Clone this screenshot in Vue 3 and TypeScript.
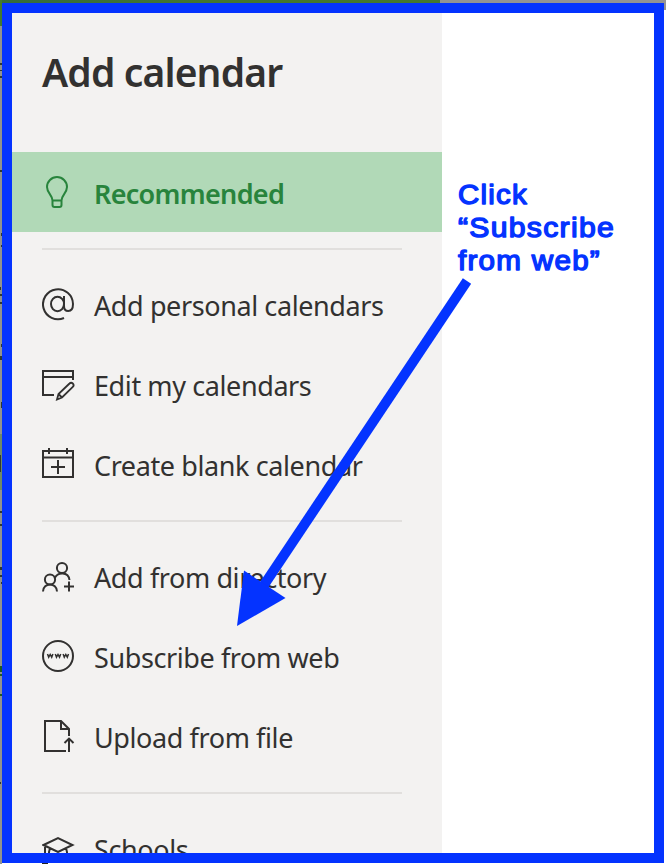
<script setup lang="ts">
type IconName = 'at' | 'edit' | 'create' | 'people' | 'web' | 'upload' | 'school'

interface MenuItem {
  label: string
  icon: IconName
}

const groups: MenuItem[][] = [
  [
    { label: 'Add personal calendars', icon: 'at' },
    { label: 'Edit my calendars', icon: 'edit' },
    { label: 'Create blank calendar', icon: 'create' },
  ],
  [
    { label: 'Add from directory', icon: 'people' },
    { label: 'Subscribe from web', icon: 'web' },
    { label: 'Upload from file', icon: 'upload' },
  ],
  [{ label: 'Schools', icon: 'school' }],
]
</script>

<template>
  <div class="page">
    <div class="backdrop-top"></div>
    <svg class="backdrop-left" width="2" height="864" viewBox="0 0 2 864" aria-hidden="true">
      <rect width="2" height="864" fill="#93938c" />
      <rect width="2" height="26" fill="#437a2b" />
      <rect y="434" width="2" height="56" fill="#718965" />
      <path d="M0 63h2v2H0zM0 70h2v1H0zM0 76h2v2H0zM0 170h2v2H0zM1 233h1v3H1zM1 245h1v2H1zM0 287h1v3H0zM0 294h2v2H0zM0 302h2v2H0zM1 344h1v3H1zM0 356h2v4H0zM1 402h1v6H1zM0 455h1v17H0zM0 511h2v2H0zM0 524h2v2H0zM0 567h2v3H0zM0 575h2v2H0zM1 582h1v2H1zM0 782h1v2H0z" fill="#303a30" />
      <path d="M0 666h2v6H0zM0 674h2v2H0zM0 694h2v2H0z" fill="#205c20" />
    </svg>
    <div class="backdrop-mark"></div>

    <main class="frame">
      <aside class="panel">
        <h1 class="title">Add calendar</h1>
        <nav>
          <div class="item selected">
            <svg class="icon" width="34" height="34" viewBox="0 0 34 34">
              <path d="M10.500 25.500C10.500 20 5 18 5 12a10 10 0 0 1 20 0c0 6-5.500 8-5.500 13.500zM10.500 25.500V30q0 2 2 2h5q2 0 2-2v-4.500" />
            </svg>
            <span class="label">Recommended</span>
          </div>
          <template v-for="(group, g) in groups" :key="g">
            <hr class="divider" />
            <div v-for="item in group" :key="item.label" class="item">
              <svg class="icon" width="34" height="34" viewBox="0 0 34 34">
                <g v-if="item.icon === 'at'">
                  <path d="M22 31A15 15 0 1 1 31 17c0 4.500-2 7-4.800 7s-4.200-2-4.200-5V9" />
                  <ellipse cx="15.500" cy="17" rx="6.500" ry="7.200" />
                </g>
                <g v-else-if="item.icon === 'edit'">
                  <path d="M12 28H1V4h30v9M1 10h30" />
                  <path d="m15 32.500 1.500-5.500L27.500 16.500a2.200 2.200 0 0 1 3.300 3.300L20 30.500zM16.500 27 20 30.500" stroke-width="1.800" />
                </g>
                <g v-else-if="item.icon === 'create'">
                  <path d="M1 4h30v26H1zM1 10.500h30M7 1v6M25 1v6M16 13v14M9 20h14" />
                </g>
                <g v-else-if="item.icon === 'people'">
                  <circle cx="20" cy="9" r="5.100" />
                  <circle cx="8" cy="20.500" r="5.100" />
                  <path d="M1 32.500c0-9.500 14-9.500 14 0M12.500 19.500c3-7 14-7 15 1.500M27 22.500v10M22 27.500h10" />
                </g>
                <g v-else-if="item.icon === 'web'">
                  <circle cx="16" cy="17" r="15" />
                  <path d="m5.500 15 1.200 3.200L8.200 15.500l1.500 2.700 1.200-3.200M13.300 15l1.200 3.200 1.500-2.700 1.500 2.700 1.200-3.200M21.100 15l1.200 3.200 1.500-2.700 1.500 2.700 1.200-3.200" stroke-width="1.500" />
                </g>
                <g v-else-if="item.icon === 'upload'">
                  <path d="M24 32H3V2h16l8 8v7M19 2v8h8M27 33V20M22.500 24l4.500-4.400 4.500 4.400" />
                </g>
                <g v-else>
                  <path d="m1.500 14 14.500-7 14.500 7L16 21zM3 14v14M8 17l-1 4v8M24 17l1 4v8" />
                </g>
              </svg>
              <span class="label">{{ item.label }}</span>
            </div>
          </template>
        </nav>
      </aside>
    </main>

    <svg class="annotation" width="666" height="864" viewBox="0 0 666 864">
      <path d="M467 281 262 588" stroke="#0433ff" stroke-width="10" />
      <path d="M244 570.500 285.500 598 237 626z" fill="#0433ff" />
      <g class="note">
        <text x="458" y="204" textLength="70" lengthAdjust="spacingAndGlyphs">Click</text>
        <text x="458" y="237" textLength="157" lengthAdjust="spacingAndGlyphs">“Subscribe</text>
        <text x="458" y="270" textLength="143" lengthAdjust="spacingAndGlyphs">from web”</text>
      </g>
    </svg>
  </div>
</template>

<style>
body {
  margin: 0;
}
</style>

<style scoped>
.page {
  position: relative;
  width: 666px;
  height: 864px;
  overflow: hidden;
  box-sizing: border-box;
  padding: 3px 2px 1px;
  background: #fff;
}
.backdrop-top {
  position: absolute;
  top: 0;
  left: 0;
  width: 666px;
  height: 10px;
  background: linear-gradient(90deg, #356b3c 0, #44762f 200px, #447830 440px, #939393 440px);
}
.backdrop-left {
  position: absolute;
  top: 0;
  left: 0;
}
.backdrop-mark {
  position: absolute;
  left: 42px;
  bottom: 0;
  width: 6px;
  height: 1px;
  background: #222;
}
.frame {
  position: relative;
  box-sizing: border-box;
  width: 662px;
  height: 860px;
  border: 10px solid #0433ff;
  background: #fff;
  overflow: hidden;
}
.panel {
  width: 430px;
  height: 840px;
  background: #f3f2f1;
  overflow: hidden;
  font-family: "Noto Sans", "Open Sans", sans-serif;
  color: #323130;
}
.title {
  margin: 0;
  height: 139px;
  box-sizing: border-box;
  padding: 32px 0 0 30px;
  font-size: 39px;
  line-height: 54px;
  font-weight: 600;
  letter-spacing: -0.85px;
  white-space: nowrap;
}
.item {
  display: flex;
  align-items: center;
  height: 80px;
  padding-left: 30px;
  font-size: 27px;
  letter-spacing: -0.4px;
  white-space: nowrap;
}
.selected {
  background: #b1d9b7;
  color: #28843c;
  font-weight: 600;
  letter-spacing: -0.7px;
}
.icon {
  flex: none;
  width: 34px;
  height: 34px;
  margin-right: 18px;
  fill: none;
  stroke: currentColor;
  stroke-width: 2;
}
.label {
  line-height: 40px;
  padding-top: 3px;
}
.divider {
  margin: 16px 40px 14px 30px;
  height: 2px;
  border: 0;
  background: #e1dfdd;
}
.annotation {
  position: absolute;
  top: 0;
  left: 0;
  fill: none;
}
.note {
  font-family: "Liberation Sans", Arial, sans-serif;
  font-size: 28px;
  letter-spacing: 1.2px;
  fill: #0433ff;
  stroke: #0433ff;
  stroke-width: 1.4px;
  stroke-linejoin: round;
}
</style>
